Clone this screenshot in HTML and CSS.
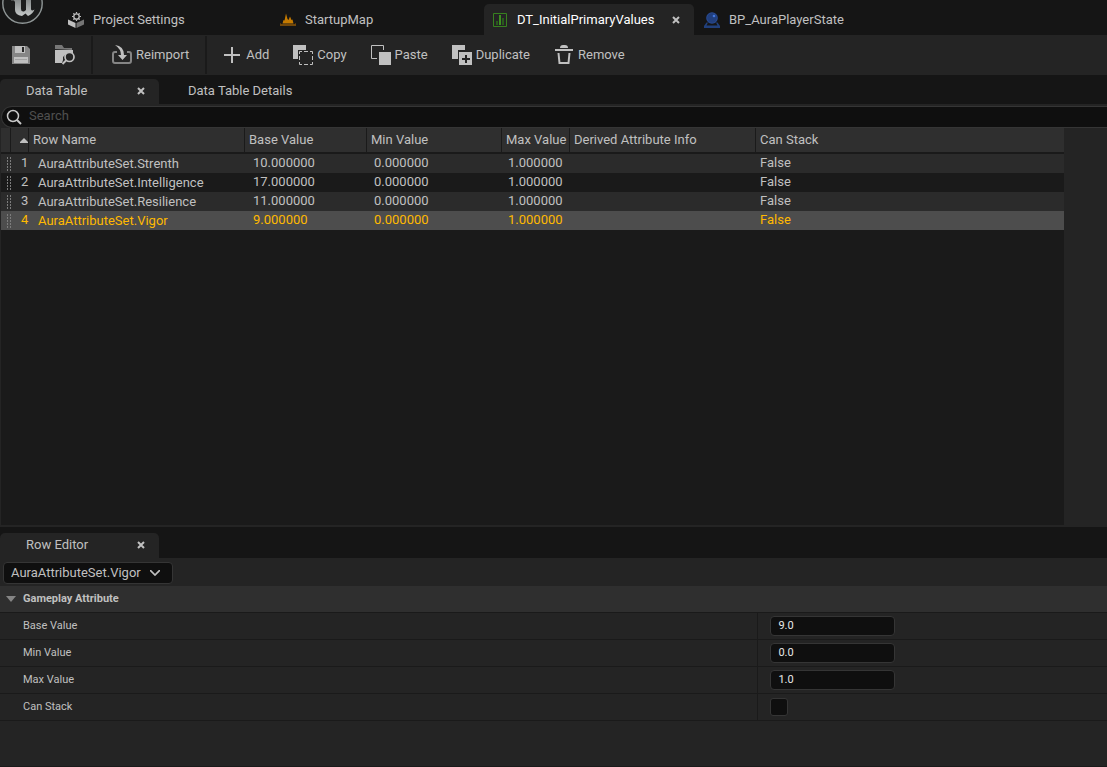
FILE: index.html
```html
<!DOCTYPE html>
<html lang="en">
<head>
  <meta charset="UTF-8" />
  <meta name="viewport" content="width=device-width, initial-scale=1.0" />
  <title>DT_InitialPrimaryValues</title>
  <link rel="stylesheet" href="styles.css">
</head>
<body>

  <header class="asset-tabs">
    <div class="logo">
      <svg width="44" height="26" viewBox="0 0 44 26">
        <defs>
          <linearGradient id="silver" x1="0" y1="0" x2="0" y2="1">
            <stop offset="0" stop-color="#7c8080" />
            <stop offset="1" stop-color="#c4c8c8" />
          </linearGradient>
        </defs>
        <circle cx="22.500" cy="3.500" r="19.700" fill="#1b1c1c" stroke="#8f9696" stroke-width="1.400" />
        <path d="M11 1 L14 -3 H21 V9 Q21 12 24 11.500 L26 10 V-2 H31 V9 Q31 11.500 34.500 9.500 Q33 13.500 28 16 L25.500 13.500 L22 16 Q15 15 15 10 V2 Q14 -1 11 1Z" fill="url(#silver)" />
      </svg>
    </div>
    <div class="asset-tab">
      <button class="tab-name">
        <svg width="16" height="16" viewBox="0 0 16 16">
          <path d="M0 7.500 L7.500 11 V16 L0 12.500Z" fill="#c0c0c0" />
          <path d="M16 7.500 L8.500 11 V16 L16 12.500Z" fill="#747474" />
          <circle cx="8.500" cy="4.500" r="4.200" fill="#161616" />
          <circle cx="8.500" cy="4.500" r="2.700" fill="none" stroke="#c0c0c0" stroke-width="1.300" />
          <path d="M8.500 0V1.500M8.500 7.500V9M4 4.500H5.500M11.500 4.500H13M5.300 1.300L6.500 2.500M11.700 1.300L10.500 2.500M5.300 7.700L6.500 6.500M11.700 7.700L10.500 6.500" stroke="#c0c0c0" stroke-width="1.200" />
        </svg>
        Project Settings
      </button>
    </div>
    <div class="asset-tab">
      <button class="tab-name">
        <svg width="16" height="16" viewBox="0 0 16 16">
          <path d="M2.500 11.500 L3.500 8 L4.500 8.500 L6 1.500 L7.500 7 L8.500 8 L10 4.500 L11.500 8 L12.500 7.500 L13.500 11.500Z" fill="#c47a00" />
          <path d="M0 11 L1.500 12 H14.500 L16 11 V14 H0Z" fill="#71470a" />
        </svg>
        StartupMap
      </button>
    </div>
    <div class="asset-tab active">
      <button class="tab-name">
        <svg width="16" height="16" viewBox="0 0 16 16">
          <path d="M1.500 1.500H14.500V14.500H1.500Z" fill="none" stroke="#37801f" />
          <path d="M4 9H6V13H4Z M10 6H12V13H10Z" fill="#285c1b" />
          <path d="M7 3H9V13H7Z" fill="#3c8f20" />
        </svg>
        DT_InitialPrimaryValues
      </button>
      <button class="tab-close" aria-label="Close DT_InitialPrimaryValues">
        <svg width="8" height="8" viewBox="0 0 8 8"><path d="M1 1L7 7M7 1L1 7" /></svg>
      </button>
    </div>
    <div class="asset-tab">
      <button class="tab-name">
        <svg width="16" height="16" viewBox="0 0 16 16">
          <path d="M0 16V14L2.500 10.500H13.500L16 14V16Z" fill="#21407c" />
          <path d="M2.500 13.500L4 10.500H12L13.500 13.500Z" fill="#161616" />
          <circle cx="8" cy="6" r="5.800" fill="#2a4c93" />
          <circle cx="8" cy="6" r="4.800" fill="#213f7e" />
          <circle cx="10" cy="4" r="1.300" fill="#4477dd" />
        </svg>
        BP_AuraPlayerState
      </button>
    </div>
  </header>

  <nav class="toolbar">
    <button class="tool" aria-label="Save">
      <svg width="20" height="20" viewBox="0 0 20 20">
        <path d="M1 1H16L19 4V19H1Z" fill="#858585" />
        <path d="M4 1H14V8H4Z" fill="#c0c0c0" />
        <path d="M11 2H13V7H11Z" fill="#242424" />
        <path d="M3 12H17V18H3Z" fill="#c0c0c0" />
        <path d="M4 14.500H16" stroke="#a2a2a2" />
      </svg>
    </button>
    <button class="tool" aria-label="Browse to asset">
      <svg width="20" height="20" viewBox="0 0 20 20">
        <path d="M0 4V0H7L9 3H17V5Z" fill="#777" />
        <path d="M0 5H18V8H12L8 12V15L7 18H0Z" fill="#c0c0c0" />
        <circle cx="14.500" cy="12" r="4.500" fill="#242424" stroke="#c0c0c0" stroke-width="1.700" />
        <path d="M11.500 15L7.500 19" stroke="#c0c0c0" stroke-width="2" />
      </svg>
    </button>
    <span class="separator"></span>
    <button class="tool reimport">
      <svg width="20" height="20" viewBox="0 0 20 20">
        <path d="M5 7H3Q1 7 1 9V16Q1 18 3 18H17Q19 18 19 16V9Q19 7 17 7H15" fill="none" stroke="#858585" stroke-width="2" />
        <path d="M3 0Q12 1 12 10H15L10.500 15L6 10H9Q9 4 3 0Z" fill="#c0c0c0" />
      </svg>
      Reimport
    </button>
    <span class="separator"></span>
    <button class="tool">
      <svg width="20" height="20" viewBox="0 0 20 20"><path d="M2 10H18M10 2V18" fill="none" stroke="#c0c0c0" stroke-width="2" /></svg>
      Add
    </button>
    <button class="tool">
      <svg width="20" height="20" viewBox="0 0 20 20">
        <path d="M0 0H13V5H5V14H0Z" fill="#c0c0c0" />
        <path d="M6.500 9V6.500H9 M11 6.500H15 M17 6.500H19.500V9 M19.500 11V15 M19.500 17V19.500H17 M15 19.500H11 M9 19.500H6.500V17 M6.500 15V11" fill="none" stroke="#c0c0c0" />
      </svg>
      Copy
    </button>
    <button class="tool">
      <svg width="20" height="20" viewBox="0 0 20 20">
        <path d="M6 13.500H0.500V0.500H12.500V5" fill="none" stroke="#c0c0c0" />
        <path d="M8 7H20V20H8Z" fill="#c0c0c0" />
      </svg>
      Paste
    </button>
    <button class="tool">
      <svg width="20" height="20" viewBox="0 0 20 20">
        <path d="M0 0H13V5H6V14H0Z" fill="#c0c0c0" />
        <path d="M7 7H20V20H7Z" fill="#c0c0c0" />
        <path d="M10 14H18M14 10V18" stroke="#242424" stroke-width="2" />
      </svg>
      Duplicate
    </button>
    <button class="tool">
      <svg width="20" height="20" viewBox="0 0 20 20">
        <path d="M6 3Q6 0 9 0H11Q14 0 14 3Z" fill="#c0c0c0" />
        <path d="M1 5H19" stroke="#c0c0c0" stroke-width="2" />
        <path d="M4.500 8L5.500 18H14.500L15.500 8" fill="none" stroke="#c0c0c0" stroke-width="2" />
      </svg>
      Remove
    </button>
  </nav>

  <main class="workspace">
    <section class="table-panel">
      <div class="panel-tabs">
        <div class="panel-tab active">
          <button class="tab-name">Data Table</button>
          <button class="tab-close" aria-label="Close Data Table">
            <svg width="8" height="8" viewBox="0 0 8 8"><path d="M1 1L7 7M7 1L1 7" /></svg>
          </button>
        </div>
        <div class="panel-tab">
          <button class="tab-name">Data Table Details</button>
        </div>
      </div>

      <label class="search">
        <svg width="16" height="16" viewBox="0 0 16 16">
          <circle cx="7" cy="7" r="5.500" fill="none" stroke="#c8c8c8" stroke-width="1.500" />
          <path d="M11 11L15 15" stroke="#c8c8c8" stroke-width="2" />
        </svg>
        <input type="text" placeholder="Search" aria-label="Search">
      </label>

      <div class="table-area">
        <table class="data-table">
          <thead>
            <tr>
              <th class="handle"></th>
              <th class="index"><svg width="8" height="5" viewBox="0 0 8 5"><path d="M4 0L8 4V5H0V4Z" fill="#c0c0c0" /></svg></th>
              <th class="name">Row Name</th>
              <th class="base">Base Value</th>
              <th class="min">Min Value</th>
              <th class="max">Max Value</th>
              <th class="derived">Derived Attribute Info</th>
              <th class="stack">Can Stack</th>
            </tr>
          </thead>
          <tbody>
            <tr>
              <td class="handle"><span class="grip"></span></td>
              <td class="index">1</td>
              <td class="name">AuraAttributeSet.Strenth</td>
              <td class="base">10.000000</td>
              <td class="min">0.000000</td>
              <td class="max">1.000000</td>
              <td class="derived"></td>
              <td class="stack">False</td>
            </tr>
            <tr>
              <td class="handle"><span class="grip"></span></td>
              <td class="index">2</td>
              <td class="name">AuraAttributeSet.Intelligence</td>
              <td class="base">17.000000</td>
              <td class="min">0.000000</td>
              <td class="max">1.000000</td>
              <td class="derived"></td>
              <td class="stack">False</td>
            </tr>
            <tr>
              <td class="handle"><span class="grip"></span></td>
              <td class="index">3</td>
              <td class="name">AuraAttributeSet.Resilience</td>
              <td class="base">11.000000</td>
              <td class="min">0.000000</td>
              <td class="max">1.000000</td>
              <td class="derived"></td>
              <td class="stack">False</td>
            </tr>
            <tr class="selected">
              <td class="handle"><span class="grip"></span></td>
              <td class="index">4</td>
              <td class="name">AuraAttributeSet.Vigor</td>
              <td class="base">9.000000</td>
              <td class="min">0.000000</td>
              <td class="max">1.000000</td>
              <td class="derived"></td>
              <td class="stack">False</td>
            </tr>
          </tbody>
        </table>
      </div>
    </section>

    <section class="editor-panel">
      <div class="panel-tabs">
        <div class="panel-tab active">
          <button class="tab-name">Row Editor</button>
          <button class="tab-close" aria-label="Close Row Editor">
            <svg width="8" height="8" viewBox="0 0 8 8"><path d="M1 1L7 7M7 1L1 7" /></svg>
          </button>
        </div>
      </div>

      <div class="row-picker">
        <select aria-label="Row">
          <option>AuraAttributeSet.Strenth</option>
          <option>AuraAttributeSet.Intelligence</option>
          <option>AuraAttributeSet.Resilience</option>
          <option selected>AuraAttributeSet.Vigor</option>
        </select>
        <svg class="chevron" width="10" height="6" viewBox="0 0 10 6"><path d="M0 0L5 5L10 0" fill="none" stroke="#c0c0c0" stroke-width="1.700" /></svg>
      </div>

      <button class="category">
        <svg width="10" height="6" viewBox="0 0 10 6"><path d="M0 0H10L5 6Z" fill="#858585" /></svg>
        Gameplay Attribute
      </button>
      <div class="property">
        <label for="base-value">Base Value</label>
        <div class="value"><input type="text" id="base-value" value="9.0"></div>
      </div>
      <div class="property">
        <label for="min-value">Min Value</label>
        <div class="value"><input type="text" id="min-value" value="0.0"></div>
      </div>
      <div class="property">
        <label for="max-value">Max Value</label>
        <div class="value"><input type="text" id="max-value" value="1.0"></div>
      </div>
      <div class="property">
        <label for="can-stack">Can Stack</label>
        <div class="value"><input type="checkbox" id="can-stack"></div>
      </div>
    </section>
  </main>

</body>
</html>
```

FILE: styles.css
```css
* {
  box-sizing: border-box;
}

body {
  margin: 0;
  min-height: 100vh;
  display: flex;
  flex-direction: column;
  background: #151515;
  color: #c0c0c0;
  font-family: Roboto, sans-serif;
  font-size: 13px;
  line-height: 16px;
}

button, input, select {
  font: inherit;
  color: inherit;
}

button {
  padding: 0;
  border: none;
  background: none;
  white-space: nowrap;
}

svg {
  display: block;
  flex: none;
}

/* top asset tabs */
.asset-tabs {
  display: flex;
  align-items: flex-end;
  height: 35px;
}

.logo {
  width: 60px;
  align-self: flex-start;
}

.asset-tab {
  display: flex;
  align-items: center;
  justify-content: space-between;
  width: 210px;
  height: 31px;
  margin-right: 2px;
  padding: 0 14px 0 8px;
  border-radius: 5px 5px 0 0;
}

.tab-name {
  display: flex;
  align-items: center;
  gap: 9px;
}

.asset-tab.active {
  background: #242424;
  color: #fff;
}

.tab-close svg {
  fill: none;
  stroke: #c0c0c0;
  stroke-width: 2;
}

/* toolbar */
.toolbar {
  display: flex;
  align-items: center;
  height: 40px;
  padding-bottom: 1px;
  background: #242424;
}

.tool {
  display: flex;
  align-items: center;
  gap: 4px;
  height: 38px;
  padding: 0 12px;
}

.tool:first-child {
  padding-left: 11px;
}

.reimport {
  margin-left: 4px;
}

.separator {
  width: 2px;
  height: 38px;
  margin: 0 3px 0 4px;
  background: #1a1a1a;
}

/* docked panels */
.workspace {
  flex: 1;
  display: flex;
  flex-direction: column;
}

.panel-tabs {
  display: flex;
  align-items: flex-end;
  gap: 3px;
  background: #151515;
}

.panel-tab {
  display: flex;
  align-items: center;
  justify-content: space-between;
  min-width: 159px;
  height: 25px;
  padding: 0 14px 2px 26px;
  border-radius: 5px 5px 0 0;
}

.panel-tab.active {
  background: #242424;
}

.table-panel {
  flex: 1;
  display: flex;
  flex-direction: column;
  background: #242424;
}

.table-panel .panel-tabs {
  height: 29px;
}

.search {
  display: flex;
  align-items: center;
  gap: 7px;
  height: 22px;
  margin: 2px 0 0 1px;
  padding-left: 4px;
  border: 1px solid #353535;
  border-right: none;
  border-radius: 11px 0 0 11px;
  background: #0f0f0f;
}

.search input {
  flex: 1;
  padding: 0 0 2px;
  border: none;
  outline: none;
  background: none;
}

.search input::placeholder {
  color: #4f4f4f;
}

.table-area {
  flex: 1;
  margin: 0 43px 2px 1px;
  background: #1a1a1a;
}

.data-table {
  width: 100%;
  table-layout: fixed;
  border-collapse: separate;
  border-spacing: 0;
}

.data-table th {
  height: 26px;
  padding: 0 0 0 4px;
  border-right: 1px solid #1a1a1a;
  border-bottom: 2px solid #1a1a1a;
  background: #2f2f2f;
  font-weight: normal;
  text-align: left;
  white-space: nowrap;
}

.data-table td {
  height: 19px;
  padding: 0 0 2px;
}

.data-table th.handle { width: 10px; padding: 0; }
.data-table th.index { width: 18px; padding: 0 0 0 9px; }
.data-table th.name { width: 216px; }
.data-table th.base { width: 122px; }
.data-table th.min { width: 135px; }
.data-table th.max { width: 68px; }
.data-table th.derived { width: 186px; }
.data-table th.stack { border-right: none; }

.data-table td.handle { padding: 0; }
.data-table td.index { padding-left: 10px; }
.data-table td.name { padding: 0 0 0 9px; }
.data-table td.base { padding-left: 8px; }
.data-table td.min { padding-left: 7px; }
.data-table td.max { padding-left: 6px; }
.data-table td.stack { padding-left: 4px; }

.data-table tbody tr:nth-child(odd) {
  background: #2b2b2b;
}

.data-table tbody tr.selected {
  background: #4d4d4d;
  color: #ffb900;
}

/* two dotted lines for dragging a row */
.grip {
  display: block;
  width: 4px;
  height: 14px;
  margin-left: 6px;
  background-image:
    repeating-linear-gradient(#7c7c7c 0 2px, transparent 2px 3px),
    repeating-linear-gradient(#7c7c7c 0 2px, transparent 2px 3px);
  background-size: 1px 100%;
  background-position: left, right;
  background-repeat: no-repeat;
}

/* row editor */
.editor-panel {
  min-height: 240px;
  background: #242424;
  border-bottom: 1px solid #1a1a1a;
}

.editor-panel .panel-tabs {
  height: 31px;
}

.row-picker {
  position: relative;
  width: 170px;
  margin: 4px 3px 2px;
}

.row-picker select {
  display: block;
  width: 100%;
  height: 22px;
  padding: 0 24px 0 7px;
  appearance: none;
  border: 1px solid #353535;
  border-radius: 4px;
  background: #0f0f0f;
}

.chevron {
  position: absolute;
  top: 8px;
  right: 13px;
  pointer-events: none;
}

.category {
  display: flex;
  align-items: center;
  gap: 7px;
  width: 100%;
  height: 27px;
  padding: 0 6px;
  border-bottom: 1px solid #1a1a1a;
  background: #2f2f2f;
  font-size: 11px;
  font-weight: bold;
}

.property {
  display: grid;
  grid-template-columns: 13fr 6fr;
  height: 27px;
  border-bottom: 1px solid #1a1a1a;
  font-size: 11px;
}

.property label {
  padding: 5px 0 0 23px;
}

.value {
  display: flex;
  align-items: center;
  padding-left: 12px;
  border-left: 1px solid #1a1a1a;
}

.value input {
  margin: 0;
  border: 1px solid #353535;
  border-radius: 4px;
  background: #0f0f0f;
}

.value input[type="text"] {
  width: 125px;
  height: 20px;
  padding: 0 7px 2px;
  color: #e8e8e8;
}

.value input[type="checkbox"] {
  width: 18px;
  height: 18px;
  appearance: none;
  border-radius: 3px;
}
```
